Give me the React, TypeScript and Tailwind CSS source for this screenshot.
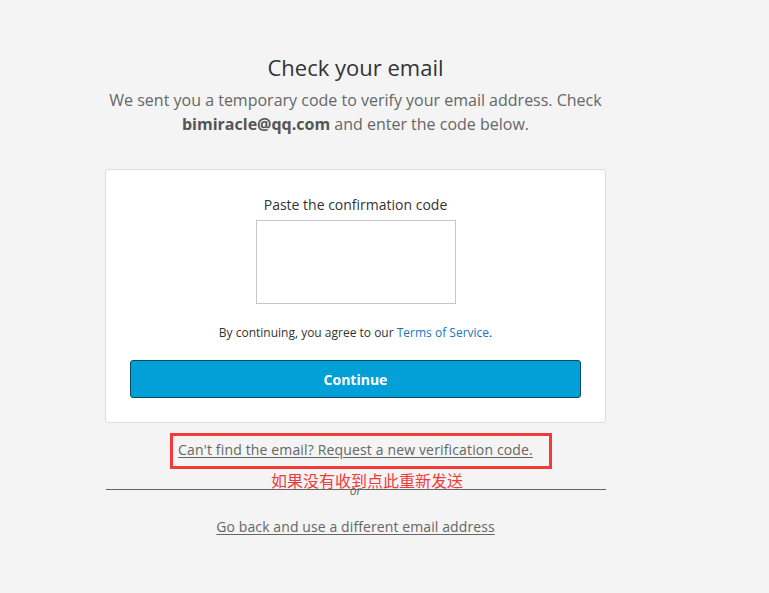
export default function App() {
  return (
    <div className="min-h-[593px] bg-[#f4f4f4] font-['Open_Sans','Noto_Sans_CJK_SC',sans-serif] text-[#333]">
      <div className="ml-[105px] w-[501px] pt-[53px]">
        <h1 className="text-center text-[22px] leading-[28px] text-[#333]">Check your email</h1>
        <p className="mt-[7px] text-center text-[16px] leading-[24px] text-[#666]">
          We sent you a temporary code to verify your email address. Check{" "}
          <span className="font-bold text-[#555]">bimiracle@qq.com</span> and enter the code below.
        </p>

        <div className="mt-[33px] rounded-[3px] border border-[#dcdcdc] bg-white px-[24px] pt-[25px] pb-[24px]">
          <label className="block text-center text-[14px] leading-[20px] text-[#333]">
            Paste the confirmation code
          </label>
          <div className="mt-[5px] flex justify-center">
            <textarea className="h-[84px] w-[200px] resize-none border border-[#c6c6c6] bg-white outline-none" />
          </div>
          <p className="mt-[20px] text-center text-[12px] leading-[18px] text-[#333]">
            By continuing, you agree to our{" "}
            <a href="#" className="text-[#1b75bb]">Terms of Service</a>.
          </p>
          <button className="mt-[18px] h-[38px] w-full rounded-[3px] border border-[#0b4a66] bg-[#039fd7] text-[14px] font-bold text-white">
            Continue
          </button>
        </div>

        <div className="relative mt-[17px] flex justify-center">
          <a href="#" className="text-[14px] leading-[20px] tracking-[0.15px] text-[#666] underline underline-offset-2">
            Can't find the email? Request a new verification code.
          </a>
          <div className="pointer-events-none absolute left-[65px] top-[-7px] h-[36px] w-[382px] border-[3px] border-[#f23a3a]" />
        </div>

        <div className="relative mt-[29px]">
          <div className="flex justify-center">
            <span className="-mt-[4px] text-[12px] italic leading-[12px] text-[#666]">or</span>
          </div>
          <div className="absolute left-[1px] right-0 top-0 border-t border-[#666]" />
          <span className="absolute left-[166px] top-[-16px] text-[16px] leading-[16px] text-[#f23a3a]">
            如果没有收到点此重新发送
          </span>
        </div>

        <div className="mt-[20px] flex justify-center">
          <a href="#" className="text-[14px] leading-[20px] tracking-[0.1px] text-[#666] underline underline-offset-2">
            Go back and use a different email address
          </a>
        </div>
      </div>
    </div>
  );
}
